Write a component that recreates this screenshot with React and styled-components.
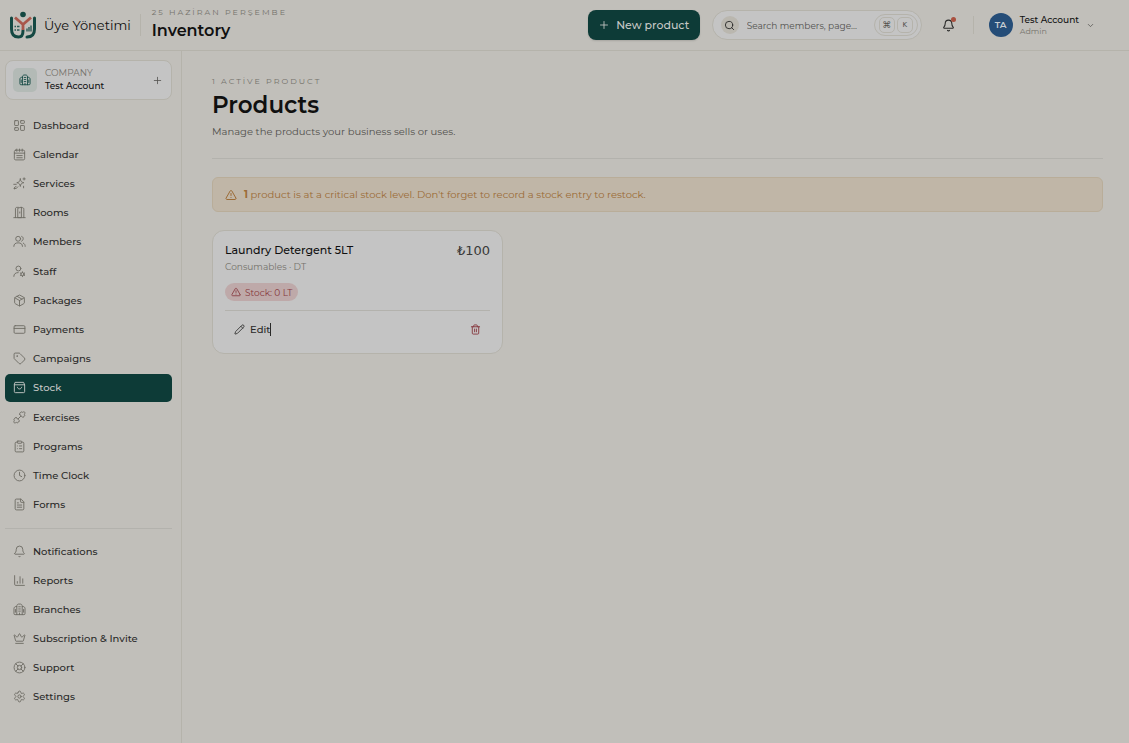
import React from "react";
import styled, { createGlobalStyle } from "styled-components";
import {
    Bell,
    ChartColumn,
    ChevronDown,
    ClipboardList,
    Clock,
    CreditCard,
    Crown,
    FileText,
    LayoutDashboard,
    LifeBuoy,
    Package,
    Pencil,
    Plus,
    Search,
    Settings,
    Tag,
    Trash2,
    TriangleAlert,
} from "lucide-react";

const colors = {
    page: "#c1bfba",
    surface: "#c4c4c4",
    line: "#b5b3ab",
    softLine: "#b3b2ad",
    green: "#0d3b37",
    ink: "#101010",
    text: "#2a2a29",
    muted: "#51504d",
    faint: "#74726b",
    red: "#87383e",
    amber: "#9b6b36",
}

const GlobalStyle = createGlobalStyle`
    * {
        box-sizing: border-box;
    }

    body {
        margin: 0;
        background: ${colors.page};
        color: ${colors.ink};
        font-family: Montserrat, Inter, sans-serif;
        font-size: 10px;
    }

    button, input {
        font: inherit;
        color: inherit;
    }

    button {
        border: 0;
        padding: 0;
        background: none;
        cursor: pointer;
    }

    h1, h2, h3, p, ul {
        margin: 0;
        padding: 0;
    }

    svg {
        flex: none;
        display: block;
    }
`;

/* ---------- icons ---------- */

const Stroke = ({size = 12, children}) => (
    <svg width={size} height={size} viewBox="0 0 24 24" fill="none" stroke="currentColor"
        strokeWidth="1.7" strokeLinecap="round" strokeLinejoin="round" aria-hidden="true">
        {children}
    </svg>
);

const CalendarIcon = (props) => (
    <Stroke {...props}>
        <rect x="2.5" y="4" width="19" height="18" rx="2.5" />
        <path d="M2.5 9.5h19M7 2v4M12 2v4M17 2v4M7 14h10M7 18h10" />
    </Stroke>
);

const SparkIcon = (props) => (
    <Stroke {...props}>
        <path d="M13.500 3.500c.6 4.500 2 6.200 6.500 7-4.500.8-5.900 2.500-6.500 7-.6-4.500-2-6.200-6.500-7 4.500-.8 5.900-2.500 6.500-7z" />
        <path d="M20.500 1.500v4M18.500 3.500h4M1.500 13.500h4.500M5.500 17.500c-2 .3-2.500 1-3 3.500M9 18l-3.500 3.500M19.500 17v3" />
        <circle cx="3" cy="21" r="1" />
    </Stroke>
);

const RoomIcon = (props) => (
    <Stroke {...props}>
        <path d="M1.500 21.500h21M4.500 21.500V5.500c0-2 1-3 3-3H10M9.500 4l6-2v19.500h-6zM15.500 3H17c2 0 3 1 3 3v15.500M12.500 11v2" />
    </Stroke>
);

const MembersIcon = (props) => (
    <Stroke {...props}>
        <circle cx="9.500" cy="7" r="4.500" />
        <path d="M1.500 21c0-4.500 3-6.500 8-6.500s8 2 8 6.500M16 2.500c3.500.5 4.500 6.500 0 9M19 15c2.500 1 3.500 3 3.500 6" />
    </Stroke>
);

const StaffIcon = (props) => (
    <Stroke {...props}>
        <circle cx="10" cy="6.500" r="4.500" />
        <path d="M1.500 21c0-4.500 3-7 8-7" />
        <circle cx="17.500" cy="17" r="3" />
        <path d="M17.500 12.500v1.500M17.500 20v1.500M13.500 14.700l1.400.8M20.100 18.500l1.400.8M13.500 19.300l1.400-.8M20.100 15.500l1.400-.8" />
    </Stroke>
);

const StockIcon = (props) => (
    <Stroke {...props}>
        <path d="M4.500 2.500h15L21.500 7v12.500a2 2 0 0 1-2 2h-15a2 2 0 0 1-2-2V7zM2.500 7h19M8 11.500c.8 4.500 7.200 4.500 8 0" />
    </Stroke>
);

const DumbbellIcon = (props) => (
    <Stroke {...props}>
        <path d="M9.500 14.500l5-5" />
        <path d="M12.500 6.500l5 5c1 1 3 0 2.300-1.700 2-.3 2.700-2 1.200-3.500.8-1.500 1.500-3.300.5-4.300s-2.800-.3-4.300.5c-1.500-1.500-3.200-.8-3.500 1.200C12 3 11.500 5.500 12.500 6.500z" />
        <path d="M6.500 12.500l5 5c1 1 0 3-1.700 2.300-.3 2-2 2.700-3.500 1.200-1.500.8-3.300 1.500-4.300.5s-.3-2.800.5-4.300C1 15.700 1.700 14 3.700 13.700 3 12 5.500 11.500 6.500 12.500z" />
    </Stroke>
);

const BuildingIcon = (props) => (
    <Stroke {...props}>
        <path d="M7 21.500V6c0-2.500 1-3.500 3-4h4c2 .5 3 1.500 3 4v15.500" />
        <path d="M7 6.500H5.500C3 6.500 2 8.500 1.800 10v9.500a2 2 0 0 0 2 2h16.400a2 2 0 0 0 2-2V10C22 8.500 21 6.500 18.500 6.500H17" />
        <path d="M10.500 7h3M10.500 11h3M10.500 15h3M12 18.500v3M4.500 12v5M19.500 12v5" />
    </Stroke>
);

const Logo = () => (
    <svg width="28" height="28" viewBox="0 0 28 28" fill="none" aria-hidden="true">
        <g stroke="#144842" strokeWidth="3" strokeLinecap="round">
            <path d="M2.500 7v11c0 5.500 3 8 7 8 3.500 0 4.500-2 4.500-6.500" />
            <path d="M25.500 7v11c0 5.500-3 8-7.500 8" />
        </g>
        <path d="M6 6.500l8 7 8-7M14 13v6" stroke="#a9574b" strokeWidth="2.800" />
        <circle cx="14" cy="3.500" r="2.800" fill="#144842" />
        <path d="M5.500 15.500h1.500M8 15.500h2.500M5.500 19h1.500M8 19h2.500M18 20.500v-3M20 20.500v-4.500M22 20.500v-6" stroke="#2d5b55" strokeWidth="1.400" />
    </svg>
);

/* ---------- top bar ---------- */

const TopBar = styled.header`
    display: flex;
    align-items: center;
    height: 51px;
    padding: 0 34px 0 9px;
    border-bottom: 1px solid ${colors.line};
`;

const Brand = styled.a`
    display: flex;
    align-items: center;
    gap: 7px;
    color: ${colors.ink};
    font-size: 13px;
    text-decoration: none;
    white-space: nowrap;
`;

const Divider = styled.span`
    width: 1px;
    height: ${({$height}) => $height}px;
    margin: ${({$margin}) => $margin};
    background: ${colors.line};
`;

const PageInfo = styled.div`
    padding-bottom: 1px;
`;

const Overline = styled.p`
    color: ${colors.faint};
    font-size: 8px;
    line-height: 12px;
    letter-spacing: 2px;
`;

const PageName = styled.h1`
    font-size: 16px;
    font-weight: 600;
    line-height: 26px;
`;

const Actions = styled.div`
    display: flex;
    align-items: center;
    margin-left: auto;
`;

const NewButton = styled.button`
    display: flex;
    align-items: center;
    justify-content: center;
    gap: 6px;
    width: 112px;
    height: 30px;
    border-radius: 8px;
    background: ${colors.green};
    color: #c6c8c6;
    font-size: 11px;
    font-weight: 500;
    box-shadow: 0 1px 2px #0002;
`;

const SearchBox = styled.label`
    display: flex;
    align-items: center;
    width: 210px;
    height: 30px;
    margin-left: 12px;
    padding: 0 3px 0 8px;
    border: 1px solid ${colors.line};
    border-radius: 15px;
    background: ${colors.surface};
`;

const SearchBadge = styled.span`
    display: grid;
    place-items: center;
    width: 18px;
    height: 18px;
    border-radius: 50%;
    background: #bab7af;
    color: ${colors.text};
`;

const SearchInput = styled.input`
    flex: 1;
    min-width: 0;
    margin-left: 8px;
    padding: 0;
    border: 0;
    outline: 0;
    background: none;
    font-size: 9px;

    &::placeholder {
        color: ${colors.muted};
        opacity: 1;
    }
`;

const Keys = styled.span`
    display: flex;
    gap: 2px;
    padding: 2px 4px;
    border: 1px solid ${colors.line};
    border-radius: 12px;
`;

const Key = styled.kbd`
    display: grid;
    place-items: center;
    width: 16px;
    height: 16px;
    border: 1px solid ${colors.line};
    border-radius: 5px;
    color: ${colors.muted};
    font: 9px "DejaVu Sans", sans-serif;

    &:last-child {
        font-size: 7px;
    }
`;

const BellButton = styled.button`
    position: relative;
    margin-left: 20px;
    color: ${colors.text};
`;

const BellDot = styled.span`
    position: absolute;
    top: -2px;
    right: -1px;
    width: 5px;
    height: 5px;
    border-radius: 50%;
    background: #a9503f;
`;

const Account = styled.button`
    display: flex;
    align-items: center;
    text-align: left;
    font-size: 9px;
    line-height: 12px;
`;

const Avatar = styled.span`
    display: grid;
    place-items: center;
    width: 24px;
    height: 24px;
    margin-right: 7px;
    border-radius: 50%;
    background: #254d78;
    color: #c8cdd2;
    font-weight: 600;
`;

const AccountName = styled.span`
    display: block;
    font-weight: 500;
    margin-right: 7px;
`;

const Role = styled.span`
    display: block;
    color: ${colors.faint};
    font-size: 8px;
    font-weight: 400;
    line-height: 10px;
`;

/* ---------- side bar ---------- */

const Body = styled.div`
    display: flex;
    min-height: calc(100vh - 51px);
`;

const Sidebar = styled.aside`
    flex: none;
    width: 182px;
    padding: 9px 9px 9px 5px;
    border-right: 1px solid ${colors.line};
`;

const Company = styled.button`
    display: flex;
    align-items: center;
    gap: 8px;
    width: 100%;
    height: 40px;
    padding: 0 8px 0 7px;
    border: 1px solid ${colors.line};
    border-radius: 8px;
    background: ${colors.surface};
    text-align: left;
    font-size: 9px;
    line-height: 14px;
`;

const CompanyIcon = styled.span`
    display: grid;
    place-items: center;
    width: 24px;
    height: 24px;
    border-radius: 5px;
    background: #b3bab6;
    color: #174a44;
`;

const CompanyText = styled.span`
    flex: 1;
    font-weight: 500;
`;

const CompanyLabel = styled.span`
    display: block;
    color: ${colors.faint};
    line-height: 12px;
    font-weight: 400;
`;

const NavList = styled.ul`
    display: flex;
    flex-direction: column;
    justify-content: space-between;
    min-height: ${({$height}) => $height}px;
    margin-top: 11px;
    list-style: none;

    & + & {
        margin-top: 9px;
        padding-top: 8px;
        border-top: 1px solid ${colors.softLine};
    }
`;

const NavLink = styled.a`
    display: flex;
    align-items: center;
    gap: 7px;
    height: 28px;
    padding: 0 8px;
    border-radius: 5px;
    background: ${({$active}) => ($active ? colors.green : "transparent")};
    color: ${({$active}) => ($active ? "#c6c8c6" : colors.text)};
    font-weight: 500;
    text-decoration: none;

    svg {
        color: ${({$active}) => ($active ? "#c6c8c6" : "#6e6c64")};
    }
`;

/* ---------- content ---------- */

const Content = styled.main`
    flex: 1;
    min-width: 0;
    padding: 24px 26px 24px 30px;
`;

const PageHead = styled.div`
    padding-bottom: 18px;
    border-bottom: 1px solid ${colors.softLine};
`;

const Title = styled.h2`
    font-size: 23px;
    font-weight: 600;
    line-height: 37px;
`;

const Lead = styled.p`
    color: ${colors.muted};
    line-height: 16px;
`;

const Warning = styled.div`
    display: flex;
    align-items: center;
    gap: 7px;
    min-height: 35px;
    margin-top: 18px;
    padding: 0 12px;
    border: 1px solid #b9ad99;
    border-radius: 6px;
    background: #c0b6a7;
    color: ${colors.amber};
`;

const CardGrid = styled.div`
    display: grid;
    grid-template-columns: repeat(3, 1fr);
    gap: 9px;
    margin-top: 18px;
`;

const Card = styled.article`
    padding: 11px 12px;
    border: 1px solid ${colors.line};
    border-radius: 12px;
    background: ${colors.surface};
`;

const CardTop = styled.div`
    display: flex;
    justify-content: space-between;
    line-height: 16px;
`;

const ProductName = styled.h3`
    font-size: 11px;
    font-weight: 500;
`;

const Price = styled.span`
    color: #3a3a39;
    font-family: "DejaVu Sans", sans-serif;
    font-size: 13px;
    line-height: 18px;
`;

const Category = styled.p`
    color: ${colors.faint};
    font-size: 9px;
    line-height: 14px;
`;

const StockBadge = styled.span`
    display: inline-flex;
    align-items: center;
    gap: 4px;
    height: 18px;
    margin-top: 9px;
    padding: 0 6px;
    border-radius: 9px;
    background: #bea9a9;
    color: ${colors.red};
    font-size: 9px;
`;

const CardActions = styled.div`
    display: flex;
    align-items: center;
    justify-content: space-between;
    margin-top: 9px;
    padding: 5px 9px 0;
    border-top: 1px solid ${colors.softLine};
`;

const EditButton = styled.button`
    display: flex;
    align-items: center;
    gap: 5px;
    height: 26px;
    color: ${colors.text};
    font-weight: 500;
`;

const EditLabel = styled.span`
    border-right: 1px solid ${colors.text};
    line-height: 13px;
`;

const DeleteButton = styled.button`
    display: grid;
    place-items: center;
    height: 26px;
    color: ${colors.red};
`;

const mainLinks = [
    {"label": "Dashboard", "icon": LayoutDashboard},
    {"label": "Calendar", "icon": CalendarIcon},
    {"label": "Services", "icon": SparkIcon},
    {"label": "Rooms", "icon": RoomIcon},
    {"label": "Members", "icon": MembersIcon},
    {"label": "Staff", "icon": StaffIcon},
    {"label": "Packages", "icon": Package},
    {"label": "Payments", "icon": CreditCard},
    {"label": "Campaigns", "icon": Tag},
    {"label": "Stock", "icon": StockIcon},
    {"label": "Exercises", "icon": DumbbellIcon},
    {"label": "Programs", "icon": ClipboardList},
    {"label": "Time Clock", "icon": Clock},
    {"label": "Forms", "icon": FileText},
]

const otherLinks = [
    {"label": "Notifications", "icon": Bell},
    {"label": "Reports", "icon": ChartColumn},
    {"label": "Branches", "icon": BuildingIcon},
    {"label": "Subscription & Invite", "icon": Crown},
    {"label": "Support", "icon": LifeBuoy},
    {"label": "Settings", "icon": Settings},
]

const Nav = ({links, current, height}) => (
    <NavList $height={height}>
        {links.map(({label, icon: Icon}) => (
            <li key={label}>
                <NavLink href="#" $active={label === current}>
                    <Icon size={13} strokeWidth={1.7} />
                    {label}
                </NavLink>
            </li>
        ))}
    </NavList>
);

const Header = () => (
    <TopBar>
        <Brand href="#">
            <Logo />
            Üye Yönetimi
        </Brand>
        <Divider $height={22} $margin="0 11px 0 9px" />
        <PageInfo>
            <Overline>25 HAZİRAN PERŞEMBE</Overline>
            <PageName>Inventory</PageName>
        </PageInfo>
        <Actions>
            <NewButton>
                <Plus size={12} strokeWidth={1.7} />
                New product
            </NewButton>
            <SearchBox>
                <SearchBadge>
                    <Search size={11} strokeWidth={2} />
                </SearchBadge>
                <SearchInput type="search" aria-label="Search" placeholder="Search members, page..." />
                <Keys>
                    <Key>⌘</Key>
                    <Key>K</Key>
                </Keys>
            </SearchBox>
            <BellButton aria-label="Notifications">
                <Bell size={13} strokeWidth={2} />
                <BellDot />
            </BellButton>
            <Divider $height={18} $margin="0 15px 0 18px" />
            <Account>
                <Avatar>TA</Avatar>
                <AccountName>
                    Test Account
                    <Role>Admin</Role>
                </AccountName>
                <ChevronDown size={9} color={colors.muted} />
            </Account>
        </Actions>
    </TopBar>
);

const ProductCard = ({name, category, price, stock}) => (
    <Card>
        <CardTop>
            <ProductName>{name}</ProductName>
            <Price>{price}</Price>
        </CardTop>
        <Category>{category}</Category>
        <StockBadge>
            <TriangleAlert size={10} />
            Stock: {stock}
        </StockBadge>
        <CardActions>
            <EditButton>
                <Pencil size={11} strokeWidth={1.8} />
                <EditLabel>Edit</EditLabel>
            </EditButton>
            <DeleteButton aria-label={`Delete ${name}`}>
                <Trash2 size={11} />
            </DeleteButton>
        </CardActions>
    </Card>
);

const App = () => {
    return (
        <>
            <GlobalStyle />
            <Header />
            <Body>
                <Sidebar>
                    <Company>
                        <CompanyIcon>
                            <BuildingIcon size={12} />
                        </CompanyIcon>
                        <CompanyText>
                            <CompanyLabel>COMPANY</CompanyLabel>
                            Test Account
                        </CompanyText>
                        <Plus size={11} strokeWidth={1.7} color={colors.muted} />
                    </Company>
                    <nav>
                        <Nav links={mainLinks} current="Stock" height={408} />
                        <Nav links={otherLinks} current="Stock" height={183} />
                    </nav>
                </Sidebar>
                <Content>
                    <PageHead>
                        <Overline>1 ACTİVE PRODUCT</Overline>
                        <Title>Products</Title>
                        <Lead>Manage the products your business sells or uses.</Lead>
                    </PageHead>
                    <Warning role="status">
                        <TriangleAlert size={12} />
                        <span><b>1</b> product is at a critical stock level. Don't forget to record a stock entry to restock.</span>
                    </Warning>
                    <CardGrid>
                        <ProductCard name="Laundry Detergent 5LT" category="Consumables · DT" price="₺100" stock="0 LT" />
                    </CardGrid>
                </Content>
            </Body>
        </>
    )
};

export default App;
